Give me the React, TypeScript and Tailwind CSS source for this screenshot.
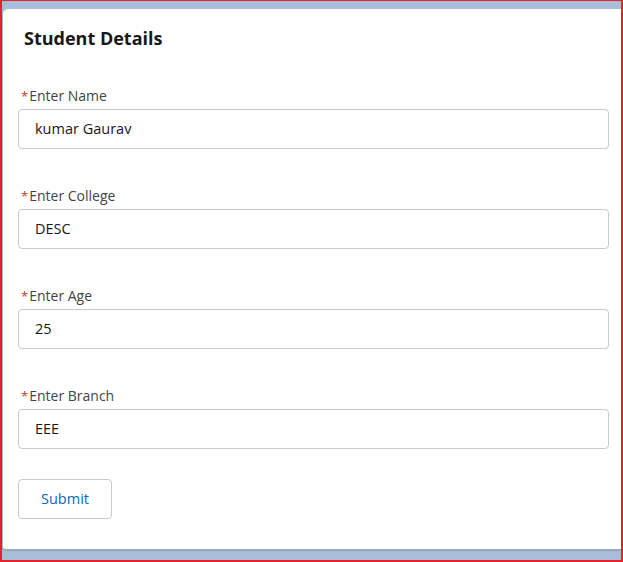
import React from 'react';

const fields = [
  { label: 'Enter Name', value: 'kumar Gaurav' },
  { label: 'Enter College', value: 'DESC' },
  { label: 'Enter Age', value: '25' },
  { label: 'Enter Branch', value: 'EEE' },
];

const App: React.FC = () => {
  return (
    <div
      className="w-[623px] h-[562px] flex flex-col bg-[#a9bcd8] border-l-2 border-r-2 border-t border-b-2 border-[#e8202a] pt-[8px] pb-[11px] pl-px"
      style={{ fontFamily: '"Open Sans", "Noto Sans", sans-serif' }}
    >
      <div className="flex-1 bg-white rounded-tl-[5px] rounded-bl-[3px] pl-[15px] pr-[12px] pt-[17px] shadow-[0_2px_2px_rgba(0,0,0,0.12)]">
        <h2 className="pl-[6px] text-[18px] leading-[24px] font-bold text-[#181818]">Student Details</h2>
        <div className="mt-[36px] flex flex-col gap-[37px]">
          {fields.map((f) => (
            <div key={f.label} className="flex flex-col">
              <label className="pl-[3px] text-[14px] leading-[20px] text-[#444444] flex items-center">
                <span className="text-[#c23934] mr-px text-[13px]">*</span>
                {f.label}
              </label>
              <div className="mt-[3px] h-[40px] border border-[#c9c9c9] rounded-[4px] flex items-center pl-[16px] text-[14.5px] text-[#181818]">
                {f.value}
              </div>
            </div>
          ))}
        </div>
        <button className="mt-[30px] w-[94px] h-[40px] border border-[#c9c9c9] rounded-[4px] bg-white text-[#0b66c4] text-[14.5px]">
          Submit
        </button>
      </div>
    </div>
  );
};

export default App;
